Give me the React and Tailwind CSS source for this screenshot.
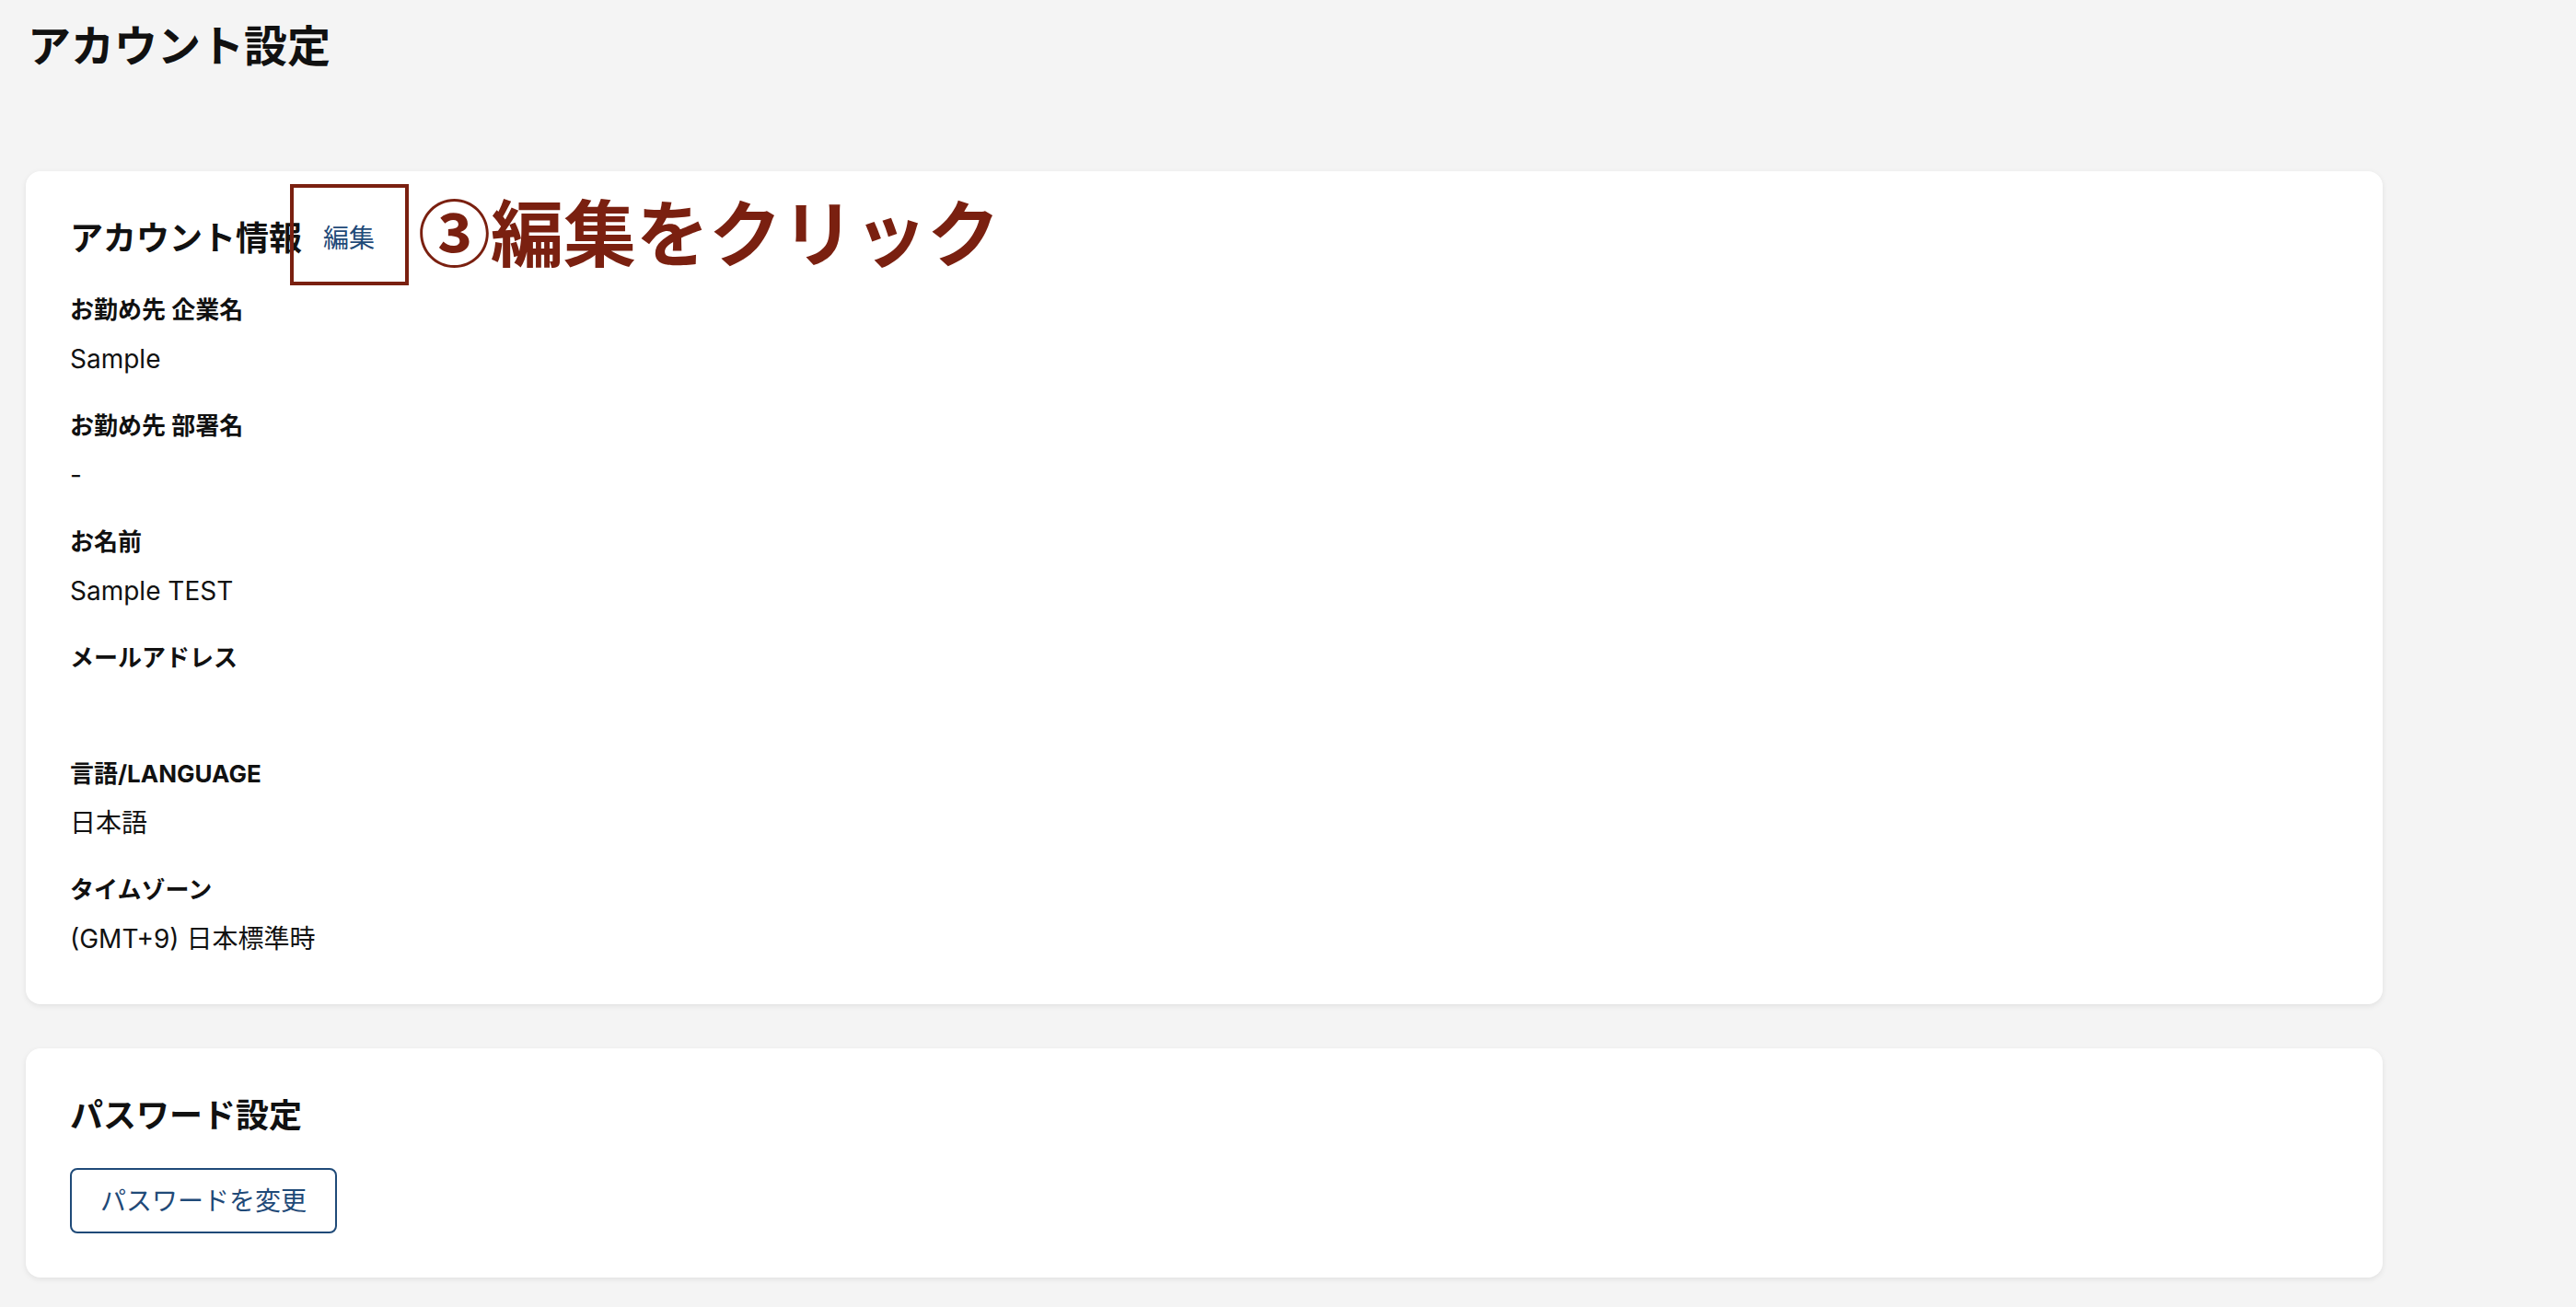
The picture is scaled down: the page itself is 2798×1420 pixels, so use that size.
export default function App() {
  const fields = [
    { label: "お勤め先 企業名", value: "Sample" },
    { label: "お勤め先 部署名", value: "-" },
    { label: "お名前", value: "Sample TEST" },
    { label: "メールアドレス", value: "" },
    { label: "言語/LANGUAGE", value: "日本語" },
    { label: "タイムゾーン", value: "(GMT+9) 日本標準時" },
  ];
  return (
    <div className="min-h-screen bg-[#f4f4f4] text-[#111111] font-['Inter','Noto_Sans_CJK_JP',sans-serif]">
      <div className="w-[2616px] px-[28px] pt-[14px] pb-[32px]">
        <h1 className="text-[47px] leading-[72px] font-bold pl-[2px]">アカウント設定</h1>

        <section className="mt-[100px] bg-white rounded-[16px] shadow-[0_2px_6px_rgba(0,0,0,0.08)] pt-[46px] pb-[50px] px-[48px]">
          <div className="relative flex items-center h-[54px] mb-[31px]">
            <h2 className="text-[36px] leading-[54px] font-bold">アカウント情報</h2>
            <span className="ml-[23px] text-[28px] leading-[54px] text-[#1f4a78]">編集</span>
            <div className="absolute left-[239px] top-[-32px] w-[129px] h-[110px] border-[4px] border-[#7a2010]"></div>
            <div className="absolute left-[378px] top-[-22px] text-[79px] leading-[80px] font-bold text-[#7a2010] whitespace-nowrap font-['Noto_Sans_CJK_JP',sans-serif]">③編集をクリック</div>
          </div>
          <div className="flex flex-col gap-[32px]">
            {fields.map((f) => (
              <div key={f.label} className="flex flex-col">
                <div className="text-[26px] leading-[40px] font-bold">{f.label}</div>
                <div className="mt-[12px] text-[28px] leading-[42px] h-[42px]">{f.value}</div>
              </div>
            ))}
          </div>
        </section>

        <section className="mt-[48px] bg-white rounded-[16px] shadow-[0_2px_6px_rgba(0,0,0,0.08)] pt-[46px] pb-[48px] px-[48px]">
          <h2 className="text-[36px] leading-[54px] font-bold mb-[30px]">パスワード設定</h2>
          <button className="w-[290px] h-[71px] border-[2px] border-[#1f4a78] rounded-[8px] text-[28px] text-[#1f4a78] flex items-center justify-center bg-white">
            パスワードを変更
          </button>
        </section>
      </div>
    </div>
  );
}
